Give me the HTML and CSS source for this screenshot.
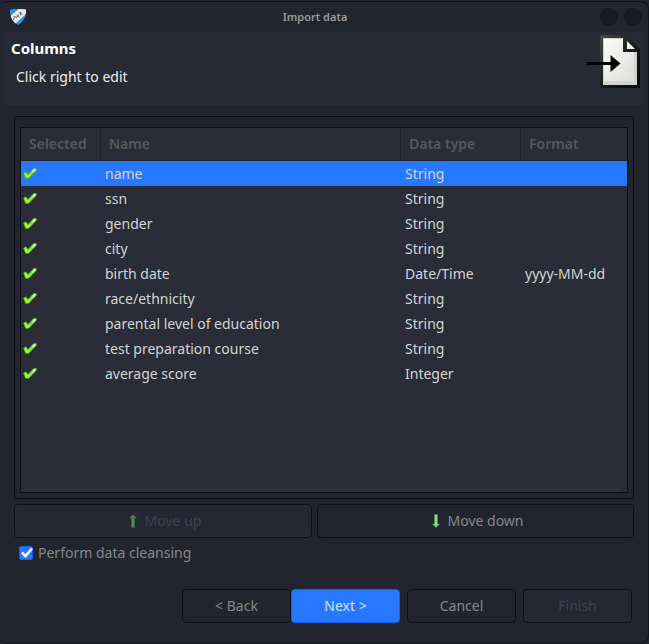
FILE: index.html
```html
<!DOCTYPE html>
<html lang="en">
<head>
<meta charset="utf-8">
<title>Import data</title>
<link rel="stylesheet" href="styles.css">
</head>
<body>
<svg class="defs" aria-hidden="true">
  <defs>
    <linearGradient id="tick-fill" x1="0" y1="1" x2="1" y2="0">
      <stop offset="0.3" stop-color="#9cfa28"/>
      <stop offset="0.55" stop-color="#86e038"/>
      <stop offset="0.85" stop-color="#d8f5d2"/>
    </linearGradient>
    <symbol id="tick" viewBox="0 0 16 16">
      <path d="M1.500 7 L4 5.800 L6 8.400 L12 2.300 L14.500 2.500 L14 4.800 L6.800 12.300 L3.600 12.500 Z" fill="url(#tick-fill)" stroke="#3f9a28" stroke-width="0.8" stroke-linejoin="round"/>
    </symbol>
  </defs>
</svg>
<div class="window">
  <header class="titlebar">
    <svg class="logo" viewBox="0 0 16 16" aria-hidden="true">
      <clipPath id="shield"><path d="M0 0.5 Q8 -0.8 16 0.5 Q16.6 11 8 16 Q-0.6 11 0 0.5Z"/></clipPath>
      <g clip-path="url(#shield)">
        <rect width="16" height="16" fill="#2d8fe8"/>
        <path d="M-1 8 L10 -1 H17 V4 L5 15 L-1 12Z" fill="#e6e8ec"/>
        <path d="M3.6 11.2 L4.2 7.4 L7 8.6 M6.6 6 L9.4 8.2 M6.8 8.2 L8.8 5.6 M9 3.8 L12.4 5 M10.6 6.4 L10.8 2.6" fill="none" stroke="#5b606a" stroke-width="0.9"/>
      </g>
    </svg>
    <h1 class="title">Import data</h1>
    <div class="controls">
      <button class="control" type="button" aria-label="Maximize"></button>
      <button class="control" type="button" aria-label="Close"></button>
    </div>
  </header>
  <section class="banner">
    <div>
      <h2 class="heading">Columns</h2>
      <p class="hint">Click right to edit</p>
    </div>
    <svg class="import-icon" viewBox="0 0 54 54" aria-hidden="true">
      <defs>
        <linearGradient id="edge" x1="0" y1="0" x2="1" y2="1">
          <stop offset="0" stop-color="#45474a"/>
          <stop offset="0.6" stop-color="#151617"/>
          <stop offset="1" stop-color="#08090a"/>
        </linearGradient>
        <linearGradient id="paper" x1="0" y1="0" x2="1" y2="1">
          <stop offset="0" stop-color="#fbfbf9"/>
          <stop offset="1" stop-color="#dededb"/>
        </linearGradient>
      </defs>
      <path d="M15 0 H40 L54 14 V53 H14 V1Z" fill="url(#edge)"/>
      <path d="M17 3 H37 V17 H51 V50 H17Z" fill="#d2d2ce"/>
      <path d="M18 4 H37 V17 H48 V46 H18Z" fill="url(#paper)"/>
      <path d="M41 6 L49 14 H41Z" fill="#f0f3fa"/>
      <path d="M1 27 H24.500 V20 L34.500 28.500 L24.500 37 V30 H1Z" fill="#000"/>
    </svg>
  </section>
  <main class="content">
    <div class="group">
      <div class="tree">
        <table class="columns">
          <colgroup><col class="col-selected"><col class="col-name"><col class="col-type"><col></colgroup>
          <thead>
            <tr><th>Selected</th><th>Name</th><th>Data type</th><th>Format</th></tr>
          </thead>
          <tbody>
            <tr class="current"><td><svg class="tick" role="img" aria-label="Yes"><use href="#tick"/></svg></td><td>name</td><td>String</td><td></td></tr>
            <tr><td><svg class="tick" role="img" aria-label="Yes"><use href="#tick"/></svg></td><td>ssn</td><td>String</td><td></td></tr>
            <tr><td><svg class="tick" role="img" aria-label="Yes"><use href="#tick"/></svg></td><td>gender</td><td>String</td><td></td></tr>
            <tr><td><svg class="tick" role="img" aria-label="Yes"><use href="#tick"/></svg></td><td>city</td><td>String</td><td></td></tr>
            <tr><td><svg class="tick" role="img" aria-label="Yes"><use href="#tick"/></svg></td><td>birth date</td><td>Date/Time</td><td>yyyy-MM-dd</td></tr>
            <tr><td><svg class="tick" role="img" aria-label="Yes"><use href="#tick"/></svg></td><td>race/ethnicity</td><td>String</td><td></td></tr>
            <tr><td><svg class="tick" role="img" aria-label="Yes"><use href="#tick"/></svg></td><td>parental level of education</td><td>String</td><td></td></tr>
            <tr><td><svg class="tick" role="img" aria-label="Yes"><use href="#tick"/></svg></td><td>test preparation course</td><td>String</td><td></td></tr>
            <tr><td><svg class="tick" role="img" aria-label="Yes"><use href="#tick"/></svg></td><td>average score</td><td>Integer</td><td></td></tr>
          </tbody>
        </table>
        <div class="scrollbar"></div>
      </div>
    </div>
    <div class="move">
      <button class="button" type="button" disabled>
        <svg class="arrow" viewBox="0 0 16 14" aria-hidden="true"><path d="M8 0.500 L11.500 4 H9.500 V13.500 H6.500 V4 H4.500Z" fill="#4f8a56" stroke="#356b3a" stroke-width="0.6"/></svg>
        Move up
      </button>
      <button class="button" type="button">
        <svg class="arrow" viewBox="0 0 16 14" aria-hidden="true"><path d="M6.500 0.500 H9.500 V10 H11.500 L8 13.500 L4.500 10 H6.500Z" fill="#8fd884" stroke="#3c9a3a" stroke-width="0.6"/></svg>
        Move down
      </button>
    </div>
    <label class="cleansing">
      <input class="checkbox" type="checkbox" checked>
      <svg class="checkmark" viewBox="0 0 14 14" aria-hidden="true"><path d="M3 6.500 L6.500 10 L13 2.500" fill="none" stroke="#fff" stroke-width="2.600"/></svg>
      <span>Perform data cleansing</span>
    </label>
  </main>
  <footer class="actions">
    <div class="pair">
      <button class="button" type="button">&lt; Back</button>
      <button class="button primary" type="button">Next &gt;</button>
    </div>
    <button class="button" type="button">Cancel</button>
    <button class="button" type="button" disabled>Finish</button>
  </footer>
</div>
</body>
</html>
```
FILE: styles.css
```css
* {
  box-sizing: border-box;
}

body {
  margin: 0;
  background: #23252e;
  color: #d3d4d6;
  font: 14px/20px "Noto Sans", sans-serif;
}

.defs {
  position: absolute;
  width: 0;
  height: 0;
}

.window {
  display: flex;
  flex-direction: column;
  min-height: calc(100vh - 1px);
  margin-top: 1px;
  padding: 0 4px;
  border: solid #14151b;
  border-width: 1px 1px 1px 0;
  border-radius: 8px;
  background: #23252e;
}

.titlebar {
  display: grid;
  grid-template-columns: auto 1fr auto;
  align-items: center;
  height: 30px;
}

.logo {
  width: 16px;
  height: 16px;
  margin: 0 4px 0 6px;
}

.title {
  margin: 0;
  color: #969aa1;
  font-size: 11px;
  font-weight: 600;
  text-align: center;
}

.controls {
  display: flex;
  gap: 6px;
  padding-right: 2px;
}

.control {
  width: 18px;
  height: 18px;
  padding: 0;
  border: 1px solid #15161a;
  border-radius: 50%;
  background: #1a1b20;
}

.banner {
  display: flex;
  justify-content: space-between;
  height: 73px;
  padding: 3px 4px 0 7px;
  background: #272a34;
}

.heading {
  margin: 3px 0 9px;
  color: #fff;
  font-size: 15px;
  font-weight: 700;
}

.hint {
  margin: 0 0 0 5px;
  color: #eeeeef;
}

.import-icon {
  width: 54px;
  height: 54px;
}

.content {
  display: flex;
  flex: 1;
  flex-direction: column;
  padding: 11px 10px 9px;
  border-bottom: 1px solid #1f2129;
}

.group {
  display: flex;
  flex: 1;
  padding: 10px 5px 5px;
  border: 1px solid #0f1015;
}

.tree {
  display: flex;
  flex: 1;
  flex-direction: column;
  justify-content: space-between;
  border: 1px solid #0f1015;
  background: #2a2c37;
}

.columns {
  width: 100%;
  border-spacing: 0;
  table-layout: fixed;
}

.col-selected {
  width: 80px;
}

.col-name {
  width: 300px;
}

.col-type {
  width: 120px;
}

.columns th {
  height: 33px;
  padding: 0 8px;
  border-right: 1px solid #20222a;
  border-bottom: 1px solid #20222a;
  color: #56585f;
  font-weight: 600;
  text-align: left;
}

.columns th:last-child {
  border-right: 0;
}

.columns td {
  height: 25px;
  padding: 0 4px;
}

.columns td:first-child {
  padding: 0 1px;
}

.current {
  background: #2777ff;
}

.tick {
  display: block;
  width: 16px;
  height: 16px;
}

.scrollbar {
  height: 3px;
  margin: 0 7px 1px 3px;
  border-radius: 2px;
  background: #30323d;
}

.move {
  display: grid;
  grid-template-columns: 298fr 317fr;
  gap: 5px;
  margin-top: 5px;
}

.button {
  display: flex;
  align-items: center;
  justify-content: center;
  gap: 4px;
  height: 34px;
  padding: 0;
  border: 1px solid #0f1015;
  border-radius: 4px;
  background: #23252e;
  color: #85878c;
  font: inherit;
}

.button:disabled {
  background: #252732;
  color: #3f4351;
}

.button.primary {
  border-color: #0f62f5;
  background: #2777ff;
  color: #d0e0ff;
}

.arrow {
  width: 16px;
  height: 14px;
}

.cleansing {
  display: grid;
  grid-template-columns: 14px auto;
  align-items: center;
  justify-content: start;
  gap: 5px;
  margin: 5px 0 0 5px;
  color: #85878c;
}

.checkbox,
.checkmark {
  grid-area: 1 / 1;
  width: 14px;
  height: 14px;
  margin: 0;
}

.checkbox {
  appearance: none;
  border: 1px solid #0f62f5;
  border-radius: 2px;
  background: #2777ff;
}

.checkmark {
  z-index: 1;
  visibility: hidden;
  pointer-events: none;
}

.checkbox:checked + .checkmark {
  visibility: visible;
}

.actions {
  display: flex;
  justify-content: flex-end;
  gap: 7px;
  padding: 16px 12px 20px;
}

.pair {
  display: flex;
}

.actions .button {
  width: 109px;
}
```
